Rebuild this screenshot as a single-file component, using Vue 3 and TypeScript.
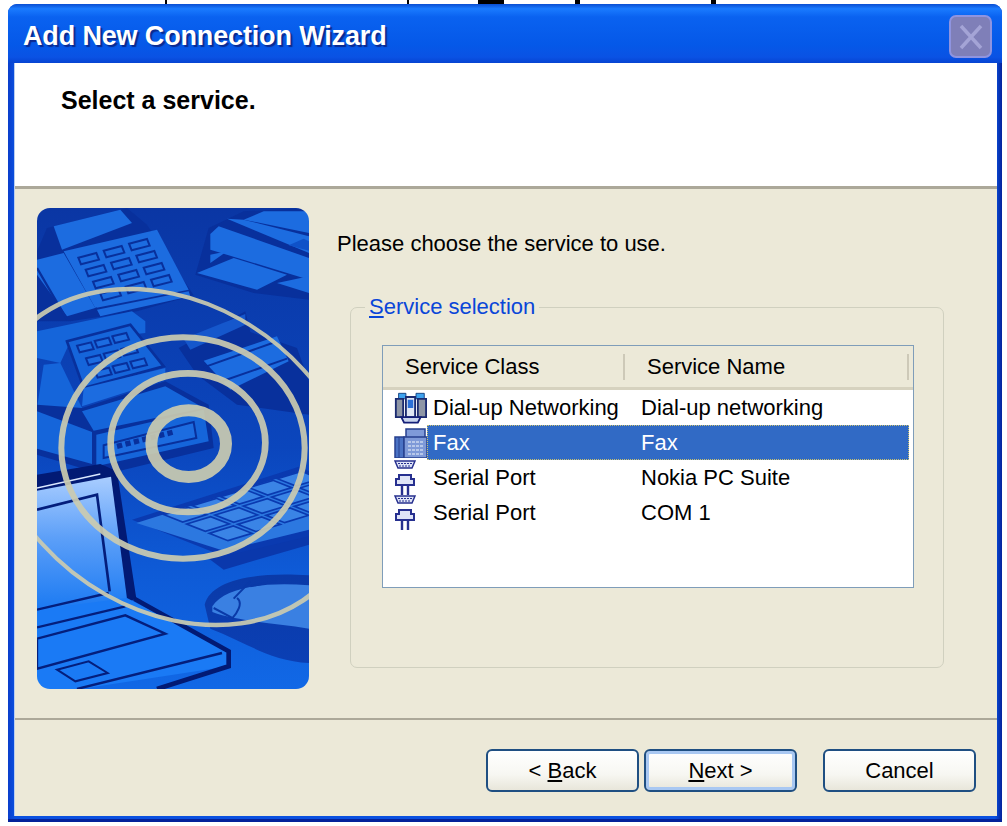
<script setup lang="ts">
type Row = { cls: string; name: string; icon: 'dialup' | 'fax' | 'serial'; selected?: boolean }

const rows: Row[] = [
  { cls: 'Dial-up Networking', name: 'Dial-up networking', icon: 'dialup' },
  { cls: 'Fax', name: 'Fax', icon: 'fax', selected: true },
  { cls: 'Serial Port', name: 'Nokia PC Suite', icon: 'serial' },
  { cls: 'Serial Port', name: 'COM 1', icon: 'serial' },
]

// sheared key caps for the illustration
function keys(ox: number, oy: number, cols: number, nrows: number, c: number[], r: number[], u: number[], v: number[]) {
  const out: string[] = []
  for (let j = 0; j < nrows; j++) {
    for (let i = 0; i < cols; i++) {
      const x = ox + c[0] * i + r[0] * j
      const y = oy + c[1] * i + r[1] * j
      out.push(
        [
          [x - u[0] - v[0], y - u[1] - v[1]],
          [x + u[0] - v[0], y + u[1] - v[1]],
          [x + u[0] + v[0], y + u[1] + v[1]],
          [x - u[0] + v[0], y - u[1] + v[1]],
        ]
          .map(p => p.join(','))
          .join(' '),
      )
    }
  }
  return out
}

const faxKeys = keys(155, 152, 3, 4, [76, -21], [22, 36], [27, -7], [4, 10])
const phoneKeys = keys(145, 418, 3, 3, [53, -14], [27, 38], [21, -5], [4, 10])
const boardKeys = keys(445, 920, 5, 3, [85, -27], [68, 28], [36, -11], [28, 11])
</script>

<template>
  <div class="page">
    <div class="cut-text">
      <span class="cut bar"></span>
      <span class="cut bar second"></span>
      <span class="cut block"></span>
      <span class="cut bracket"></span>
    </div>

    <div class="window">
      <div class="titlebar">
        <span class="title">Add New Connection Wizard</span>
        <span class="close">
          <svg width="30" height="30" viewBox="0 0 30 30">
            <path d="M5 4 L25 26 M25 4 L5 26" stroke="#a4a4d6" stroke-width="3.5" fill="none" />
          </svg>
        </span>
      </div>

      <div class="body">
        <div class="head">Select a service.</div>

        <div class="content">
          <div class="art">
            <svg width="272" height="481" viewBox="0 0 816 1443">
              <defs>
                <linearGradient id="bg" x1="0" y1="0" x2="0" y2="1">
                  <stop offset="0" stop-color="#0a36a4" />
                  <stop offset="0.5" stop-color="#0b46bd" />
                  <stop offset="0.75" stop-color="#0e5ad6" />
                  <stop offset="1" stop-color="#1168e6" />
                </linearGradient>
                <linearGradient id="screen" x1="0" y1="0" x2="0" y2="1">
                  <stop offset="0" stop-color="#a9cdff" />
                  <stop offset="0.45" stop-color="#5c9ff8" />
                  <stop offset="1" stop-color="#1878f2" />
                </linearGradient>
                <linearGradient id="mouse" x1="0" y1="0" x2="0" y2="1">
                  <stop offset="0" stop-color="#0a3aa8" />
                  <stop offset="1" stop-color="#0b3fb4" />
                </linearGradient>
              </defs>

              <rect width="816" height="1443" fill="url(#bg)" />

              <!-- fax, back left -->
              <polygon points="30,60 270,0 330,50 470,262 300,310 100,340 0,340 0,130" fill="#08309c" />
              <polygon points="50,55 250,5 285,45 75,125" fill="#1c6ce0" />
              <polygon points="80,130 360,65 455,245 175,300" fill="#1c6ce0" />
              <polygon points="0,155 80,135 175,300 90,325 0,200" fill="#1c6ce0" />
              <path d="M0 180 L90 335 M180 300 L175 305" stroke="#08309c" stroke-width="7" fill="none" />
              <polygon points="180,305 455,250 460,265 300,300 190,325" fill="#1c6ce0" />
              <polygon v-for="(k, i) in faxKeys" :key="'f' + i" :points="k" fill="#1c6ce0" stroke="#08309c" stroke-width="6" />

              <!-- printer, top right -->
              <polygon points="475,200 515,60 620,10 816,0 816,275 650,255" fill="#08309c" />
              <polygon points="620,35 680,10 816,10 816,75" fill="#1c6ce0" />
              <polygon points="520,78 545,55 816,150 816,215 520,125" fill="#1c6ce0" />
              <polygon points="570,32 620,35 816,85 816,135" fill="#1c6ce0" />
              <polygon points="755,112 800,92 816,100 816,128" fill="#0f52c8" />
              <polygon points="480,195 590,150 750,200 660,245" fill="#1c6ce0" />
              <polygon points="720,225 816,205 816,255" fill="#1c6ce0" />
              <polygon points="520,140 570,130 520,165" fill="#1c6ce0" />

              <!-- scanner -->
              <polygon points="425,420 625,310 640,372 780,420 816,520 816,620 600,590 480,500" fill="#08309c" />
              <polygon points="440,392 625,318 625,350 460,425" fill="#1557cc" />
              <polygon points="500,458 720,385 755,460 580,545" fill="#1c6ce0" />
              <path d="M500 478 L715 402 M540 525 L750 452" stroke="#08309c" stroke-width="6" fill="none" />

              <!-- phone -->
              <polygon points="0,370 285,310 325,340 325,375 100,400 70,465 0,450" fill="#1565da" />
              <polygon points="90,400 280,350 380,475 140,540" fill="#1565da" stroke="#08309c" stroke-width="8" />
              <polygon v-for="(k, i) in phoneKeys" :key="'p' + i" :points="k" fill="#1c6ce0" stroke="#08309c" stroke-width="6" />
              <polygon points="20,470 70,465 135,600 0,600" fill="#1565da" />
              <polygon points="140,540 385,480 385,515 135,595" fill="#1c6ce0" />

              <!-- fax base -->
              <polygon points="0,590 135,600 385,520 515,590 530,720 200,800 0,740" fill="#08309c" />
              <polygon points="135,610 385,535 500,600 170,668" fill="#1565da" />
              <polygon points="0,610 165,672 165,768 0,722" fill="#1565da" />
              <polygon points="178,680 500,605 515,700 178,775" fill="#1565da" />
              <polygon points="200,712 470,642 478,690 200,750" fill="#1c6ce0" stroke="#08309c" stroke-width="6" />
              <path d="M240 715 L410 672" stroke="#08309c" stroke-width="16" stroke-dasharray="16 10" fill="none" />

              <!-- keyboard -->
              <polygon points="500,1040 816,955 816,1010 560,1085" fill="#0a38ac" />
              <polygon points="285,935 790,775 816,790 816,985 560,1045" fill="#0a3ab0" />
              <polygon points="298,945 790,790 816,805 816,965 560,1028" fill="#2c78e0" />
              <polygon v-for="(k, i) in boardKeys" :key="'k' + i" :points="k" fill="#3a84e6" stroke="#0a3ab0" stroke-width="5" />

              <!-- mouse -->
              <path d="M503 1190 C520 1120 640 1090 816 1102 L816 1365 C700 1360 620 1300 520 1262 Z" fill="url(#mouse)" />
              <path d="M526 1195 C560 1140 680 1120 816 1132 L816 1262 C720 1245 600 1240 526 1212 Z" fill="#3a80e2" />
              <path d="M590 1172 L640 1120 M600 1170 C620 1185 600 1215 585 1232 M530 1200 L590 1232 M640 1135 L720 1118" stroke="#0a3aa8" stroke-width="6" fill="none" />

              <!-- laptop -->
              <polygon points="0,800 190,768 240,790 298,1172 265,1185 0,1230" fill="#021a74" />
              <polygon points="0,848 222,806 270,1172 0,1215" fill="url(#screen)" />
              <path d="M0 840 L190 798" stroke="#dbe8ff" stroke-width="4" fill="none" />
              <path d="M0 905 L180 860 L218 1150" stroke="#041e7c" stroke-width="8" fill="none" />
              <polygon points="0,1205 270,1170 575,1330 575,1375 130,1443 0,1443" fill="#1a7af5" />
              <path d="M292 1172 L575 1330 L575 1375 L360 1443" stroke="#021a74" stroke-width="14" fill="none" />
              <path d="M0 1205 L215 1155 M0 1258 L265 1195" stroke="#041e7c" stroke-width="7" fill="none" />
              <polygon points="0,1292 265,1222 385,1277 0,1382" fill="#1a7af5" stroke="#041e7c" stroke-width="7" />
              <polygon points="60,1385 155,1360 212,1395 115,1420" fill="#1a7af5" stroke="#041e7c" stroke-width="6" />
              <path d="M120 1443 L555 1335" stroke="#041e7c" stroke-width="7" fill="none" />

              <!-- rings -->
              <g fill="none" stroke="#cbcbb0" stroke-opacity="0.92">
                <ellipse cx="455" cy="707" rx="112" ry="100" stroke-width="36" />
                <ellipse cx="453" cy="704" rx="232" ry="208" stroke-width="20" />
                <ellipse cx="438" cy="720" rx="365" ry="332" stroke-width="18" />
                <ellipse rx="552" ry="490" stroke-width="13" transform="matrix(1 0.214 0 1 408 747)" />
              </g>
            </svg>
          </div>

          <div class="main">
            <p class="prompt">Please choose the service to use.</p>

            <fieldset class="group">
              <legend><u>S</u>ervice selection</legend>

              <div class="list">
                <div class="list-head">
                  <span class="col-a">Service Class</span>
                  <span class="col-b">Service Name</span>
                </div>
                <div v-for="(row, i) in rows" :key="i" class="row">
                  <span class="row-icon">
                    <svg v-if="row.icon === 'dialup'" width="36" height="34" viewBox="0 0 36 34">
                      <path d="M5 1 H13 V7 H5 Z M24 1 H33 V7 H24 Z" fill="#3ea2ee" stroke="#15407e" stroke-width="1" />
                      <path d="M2 7 H10 V27 H2 Z M26 7 H35 V27 H26 Z" fill="#8e96a6" stroke="#1a2a70" stroke-width="2" />
                      <path d="M13 5 H23 V27 H13 Z" fill="#dfe6f4" stroke="#1a2a70" stroke-width="2" />
                      <rect x="15" y="8" width="6" height="9" fill="#2b6fd8" />
                      <path d="M8 27 H29 L26 33 H11 Z" fill="#c8d4ee" stroke="#141f78" stroke-width="2" />
                    </svg>
                    <svg v-else-if="row.icon === 'fax'" width="33" height="30" viewBox="0 0 33 30">
                      <path d="M12 1 H31 V10 H12 Z" fill="#7f9ad8" stroke="#27408f" stroke-width="1.5" />
                      <path d="M1 9 H10 V30 H1 Z" fill="#4a72c4" stroke="#27408f" stroke-width="1.5" />
                      <path d="M10 9 H33 V30 H10 Z" fill="#7f9ad8" stroke="#27408f" stroke-width="1.5" />
                      <path d="M14 14 H30 M14 18 H30 M14 22 H30 M14 26 H30" stroke="#b8c8ea" stroke-width="2" stroke-dasharray="3 1" />
                      <path d="M5 9 V30" stroke="#27408f" stroke-width="1" />
                    </svg>
                    <svg v-else width="22" height="35" viewBox="0 0 22 35">
                      <path d="M1 1 H21 L18 8 H4 Z" fill="#dfe4f6" stroke="#27308f" stroke-width="1.5" />
                      <path d="M4 3.5 H18 M5 6 H17" stroke="#27308f" stroke-width="1.2" stroke-dasharray="2 1" />
                      <path d="M5 15 H17 V19 H20 V25 H2 V19 H5 Z" fill="#dfe4f6" stroke="#27308f" stroke-width="2" />
                      <path d="M8 25 V35 M14 25 V35" stroke="#27308f" stroke-width="2.4" />
                    </svg>
                  </span>
                  <span class="cells" :class="{ selected: row.selected }">
                    <span class="cell-a">{{ row.cls }}</span>
                    <span>{{ row.name }}</span>
                  </span>
                </div>
              </div>
            </fieldset>
          </div>
        </div>

        <div class="footer">
          <button class="btn back">&lt; <u>B</u>ack</button>
          <button class="btn next"><u>N</u>ext &gt;</button>
          <button class="btn cancel">Cancel</button>
        </div>
      </div>
    </div>
  </div>
</template>

<style>
html,
body {
  margin: 0;
  background: #fff;
}
</style>

<style scoped>
.page {
  width: 1007px;
  height: 826px;
  overflow: hidden;
  font-family: "Liberation Sans", Arial, sans-serif;
  color: #000;
}

/* bottom of a line of text cut off by the screenshot */
.cut-text {
  display: flex;
  height: 4px;
  overflow: hidden;
}
.cut {
  display: block;
  height: 4px;
  background: #000;
}
.bar {
  width: 2px;
  margin-left: 165px;
}
.bar.second {
  margin-left: 240px;
}
.block {
  width: 26px;
  margin-left: 69px;
}
.bracket {
  width: 141px;
  margin-left: 71px;
  background: none;
  border-left: 5px solid #000;
  border-right: 5px solid #000;
  box-sizing: border-box;
}

.window {
  margin-left: 8px;
  width: 994px;
  height: 818px;
  display: flex;
  flex-direction: column;
  border-radius: 9px 9px 0 0;
  background: linear-gradient(90deg, #0a3ecb 0, #0a50e0 7px, #0a50e0 987px, #04229a 100%);
  box-shadow: inset 0 -3px 0 #04229a;
  overflow: hidden;
}

.titlebar {
  height: 59px;
  flex-shrink: 0;
  box-sizing: border-box;
  display: flex;
  align-items: center;
  justify-content: space-between;
  padding: 6px 10px 0 15px;
  background: linear-gradient(180deg, #0a4ed2 0, #1a7bff 8%, #0a62f0 22%, #0558e8 70%, #0a52e4 90%, #0644d2 100%);
}
.title {
  color: #fff;
  font-size: 27px;
  font-weight: 700;
  letter-spacing: -0.15px;
  text-shadow: 2px 2px 1px #0a2a90;
}
.close {
  width: 43px;
  height: 43px;
  box-sizing: border-box;
  display: flex;
  align-items: center;
  justify-content: center;
  border: 2px solid #8f94e0;
  border-radius: 7px;
  background: #7f7fb8;
}

.body {
  flex: 1;
  min-height: 0;
  display: flex;
  flex-direction: column;
  margin: 0 5px 6px 6px;
  border-left: 1px solid #b9cdf0;
  background: #ece9d8;
}

.head {
  height: 126px;
  flex-shrink: 0;
  box-sizing: border-box;
  padding: 23px 0 0 46px;
  background: #fff;
  border-bottom: 3px solid #aca899;
  font-size: 25px;
  font-weight: 700;
}

.content {
  height: 531px;
  flex-shrink: 0;
  display: flex;
  box-sizing: border-box;
  padding: 19px 0 0 22px;
  border-bottom: 2px solid #aca899;
}
.art {
  width: 272px;
  height: 481px;
  border-radius: 13px;
  overflow: hidden;
  flex-shrink: 0;
}
.art svg {
  display: block;
  filter: blur(0.5px);
}

.main {
  margin-left: 28px;
}
.prompt {
  margin: 0;
  padding-top: 24px;
  font-size: 22px;
  line-height: 24px;
}

.group {
  width: 594px;
  height: 373px;
  box-sizing: border-box;
  margin: 39px 0 0 13px;
  padding: 26px 30px 0 31px;
  border: 1px solid #d0d0bf;
  border-radius: 7px;
  min-inline-size: 0;
}
.group legend {
  margin-left: -17px;
  padding: 0 4px;
  font-size: 22px;
  line-height: 24px;
  color: #0a46d8;
}

.list {
  width: 532px;
  height: 243px;
  box-sizing: border-box;
  border: 1px solid #7f9db9;
  background: #fff;
  font-size: 22px;
}
.list-head {
  height: 44px;
  box-sizing: border-box;
  display: flex;
  align-items: center;
  padding-right: 4px;
  background: #ece9d8;
  border-bottom: 3px solid #d6d2bf;
}
.col-a {
  width: 242px;
  box-sizing: border-box;
  padding-left: 22px;
  line-height: 26px;
  border-right: 2px solid #cdc9b8;
}
.col-b {
  flex: 1;
  padding-left: 22px;
  line-height: 26px;
  border-right: 2px solid #cdc9b8;
}

.row {
  height: 35px;
  display: flex;
  align-items: center;
}
.row-icon {
  width: 44px;
  padding-left: 11px;
  box-sizing: border-box;
  flex-shrink: 0;
  display: flex;
  align-items: center;
}
.row-icon svg {
  display: block;
}
.cells {
  flex: 1;
  height: 100%;
  margin-right: 4px;
  padding-left: 6px;
  display: flex;
  align-items: center;
}
.cell-a {
  width: 208px;
  flex-shrink: 0;
}
.cells.selected {
  background: #316ac5;
  color: #fff;
  outline: 1px dotted #c8c070;
  outline-offset: -1px;
}

.footer {
  flex: 1;
  display: flex;
  align-items: flex-start;
  padding: 29px 21px 0 0;
  justify-content: flex-end;
}
.btn {
  width: 153px;
  height: 43px;
  box-sizing: border-box;
  padding: 0;
  border: 2px solid #1f4f82;
  border-radius: 6px;
  background: linear-gradient(180deg, #ffffff 0, #f7f7f2 60%, #e8e6da 100%);
  font-family: "Liberation Sans", Arial, sans-serif;
  font-size: 22px;
  color: #000;
}
.next {
  margin-left: 5px;
  box-shadow: inset 0 0 0 3px #a9c8f2;
}
.cancel {
  margin-left: 26px;
}
</style>
